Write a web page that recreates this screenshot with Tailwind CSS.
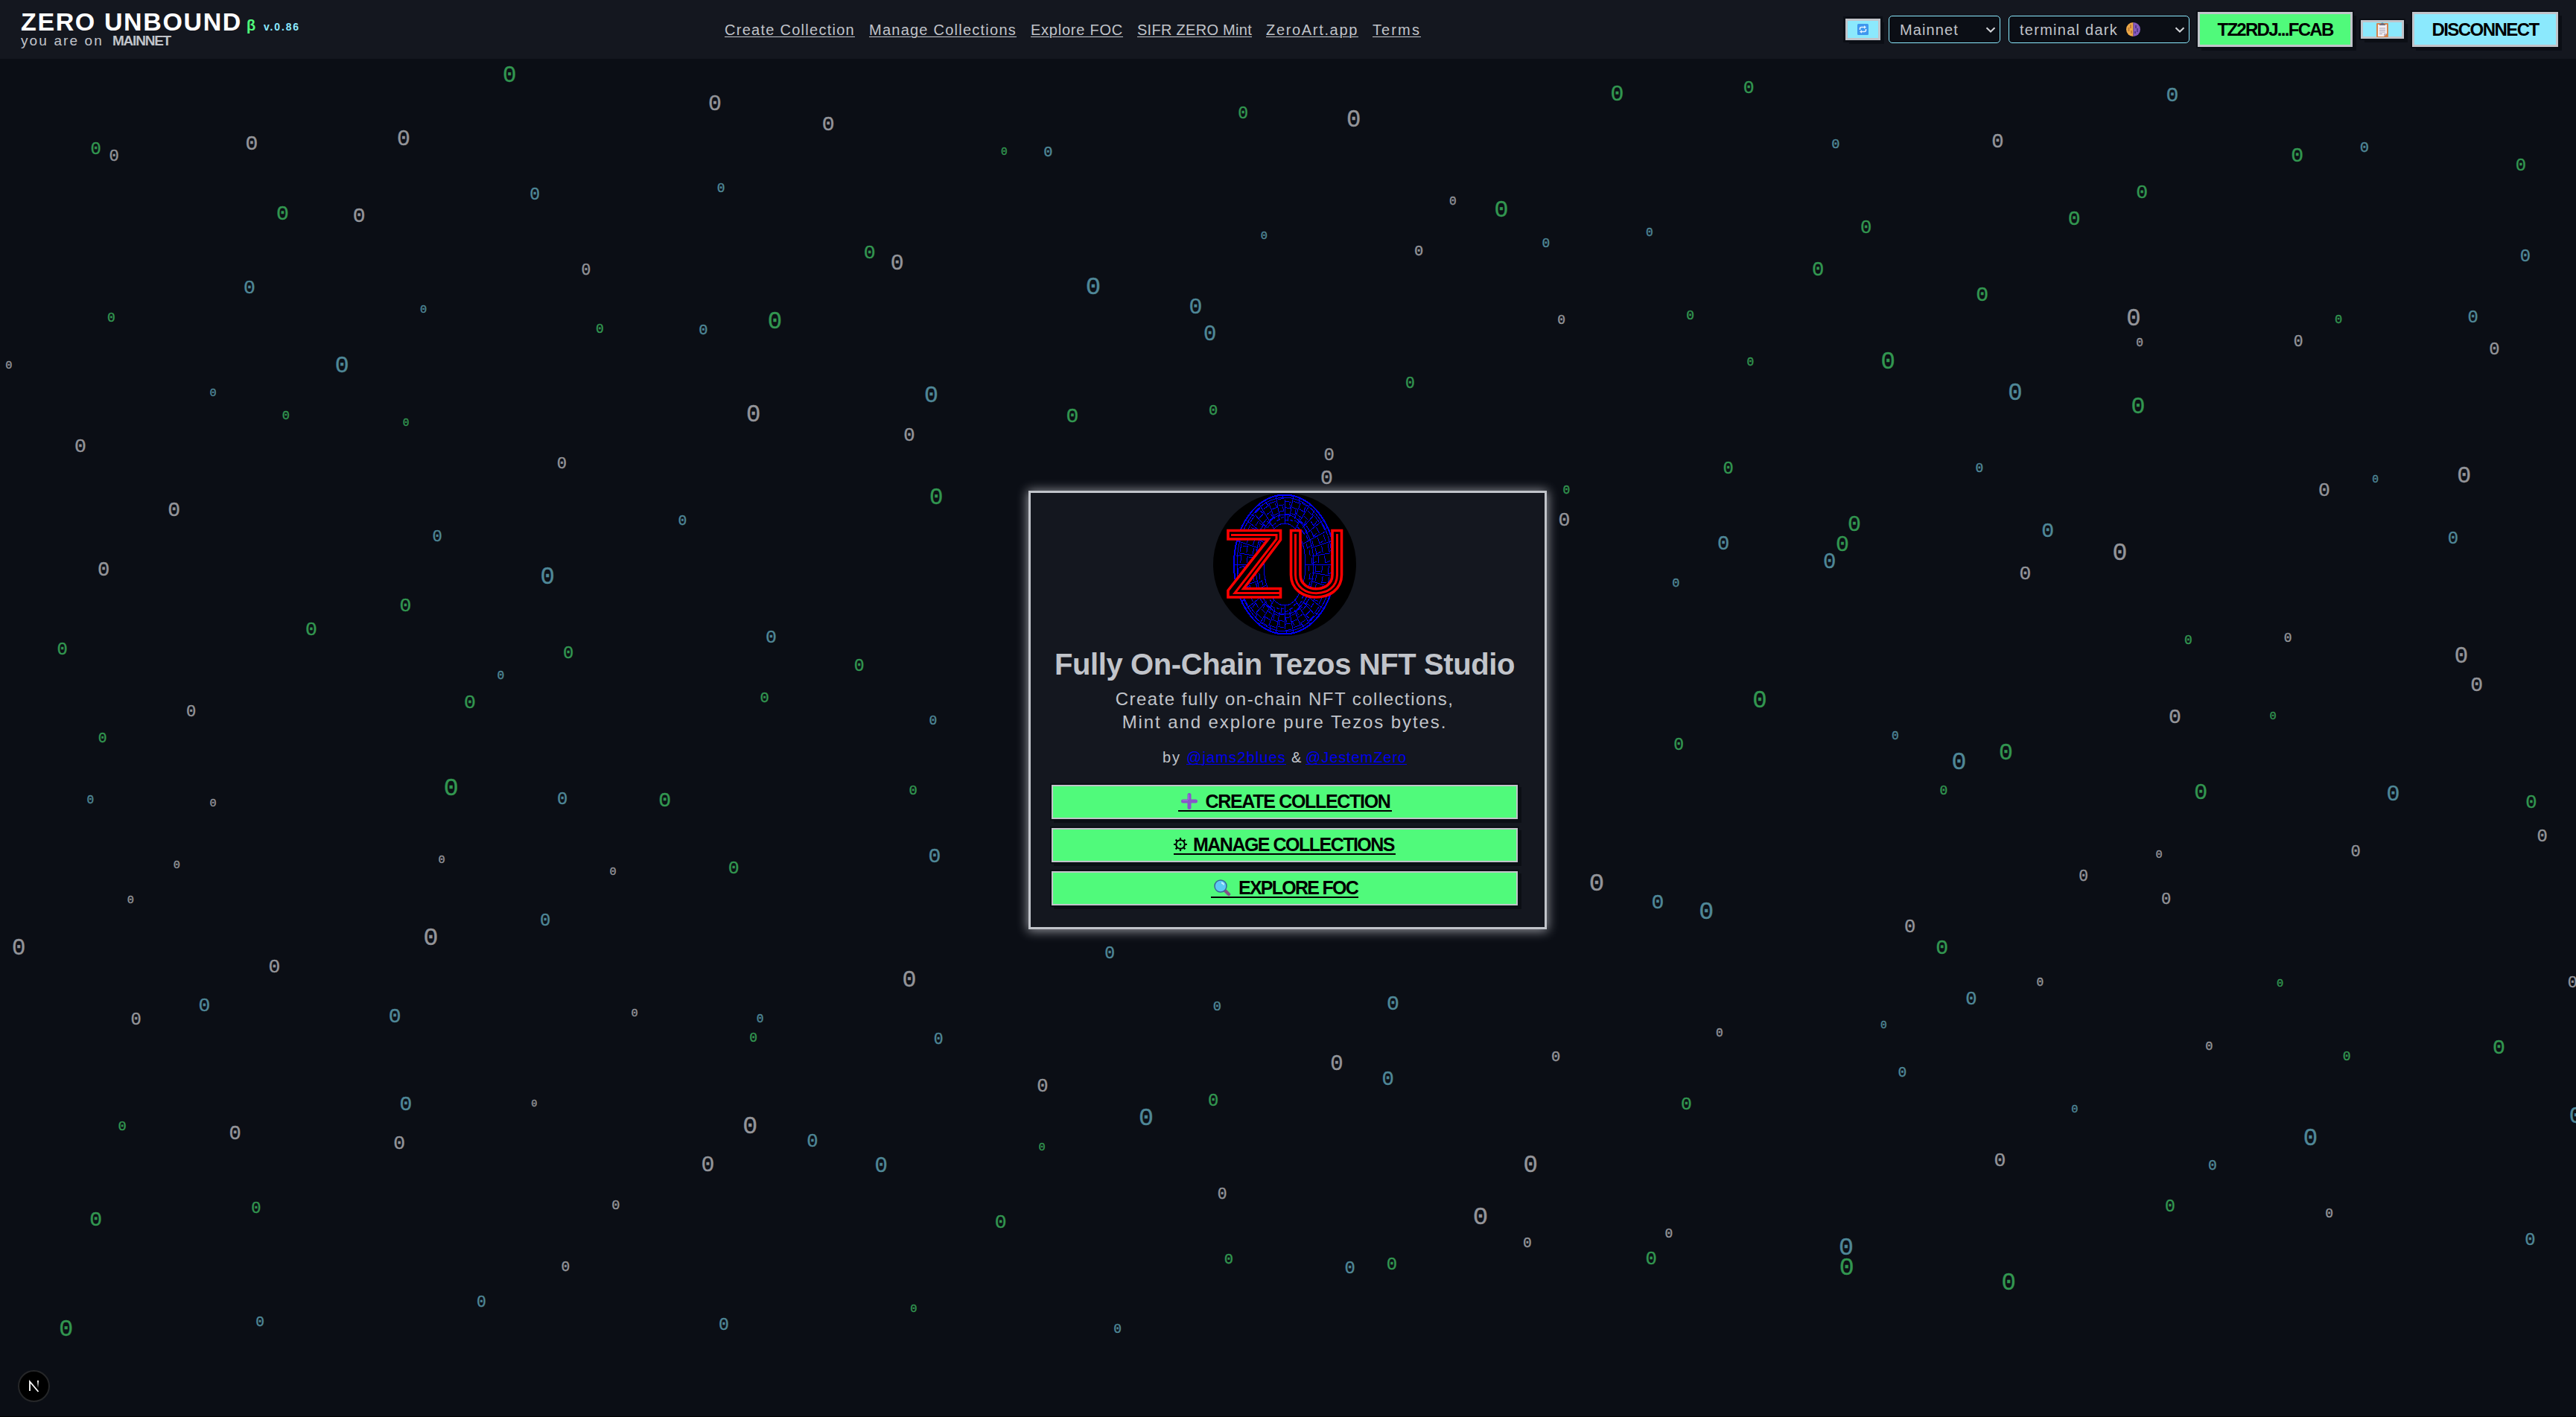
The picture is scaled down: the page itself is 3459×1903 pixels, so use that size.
<!DOCTYPE html>
<html lang="en">
<head>
<meta charset="utf-8">
<title>Zero Unbound</title>
<script src="https://cdn.jsdelivr.net/npm/@tailwindcss/browser@4"></script>
</head>
<body class="relative flex h-screen w-screen flex-col overflow-hidden bg-[#0b0e15] font-['Liberation_Sans',sans-serif] text-[#c1c4ca]">
<div id="zeros" class="absolute inset-0 overflow-hidden font-['Liberation_Mono',monospace] leading-none [-webkit-text-stroke:0.4px]"></div>

<header class="relative flex h-[79px] shrink-0 items-start bg-[#14171f]">
  <div class="w-[973px] shrink-0 pt-3 pl-7">
    <div class="flex h-[33px] items-baseline leading-[34px] font-bold">
      <span class="w-[303px] text-[34px] whitespace-nowrap text-white"><span data-fit="297" data-font="bold 34px">ZERO UNBOUND</span></span>
      <span class="w-[23px] text-[20px] text-[#50fa7b]">β</span>
      <span class="text-[14px] text-[#8be9fd]"><span data-fit="49" data-font="bold 14px">v.0.86</span></span>
    </div>
    <div class="flex text-[19px] leading-5 whitespace-nowrap">
      <span class="w-[123px]"><span data-fit="111" data-font="19px">you are on</span></span>
      <span class="font-bold"><span data-fit="78" data-font="bold 19px">MAINNET</span></span>
    </div>
  </div>
  <nav class="flex shrink-0 gap-[19px] pt-[30px] text-[20px] leading-5 whitespace-nowrap">
    <a class="w-[175px] underline decoration-1 underline-offset-2"><span data-fit="175" data-font="20px">Create Collection</span></a>
    <a class="w-[198px] underline decoration-1 underline-offset-2"><span data-fit="198" data-font="20px">Manage Collections</span></a>
    <a class="w-[124px] underline decoration-1 underline-offset-2"><span data-fit="124" data-font="20px">Explore FOC</span></a>
    <a class="w-[154px] underline decoration-1 underline-offset-2"><span data-fit="154" data-font="20px">SIFR ZERO Mint</span></a>
    <a class="w-[124px] underline decoration-1 underline-offset-2"><span data-fit="124" data-font="20px">ZeroArt.app</span></a>
    <a class="w-[65px] underline decoration-1 underline-offset-2"><span data-fit="65" data-font="20px">Terms</span></a>
  </nav>
  <div class="ml-auto flex h-[79px] items-center pr-6 text-[20px] leading-5 whitespace-nowrap">
    <button class="mr-[11px] flex h-[29px] w-[47px] items-center justify-center border-[3px] border-[#c1c4ca] bg-[#8be9fd] shadow-[0_0_0_3px_#0b0e15,5px_5px_0_0_#0b0e15]">
      <svg width="15" height="15" viewBox="0 0 15 15"><rect width="15" height="15" rx="1.5" fill="#3f97ee"/><path d="M3.5 8V6.5Q3.500 4.500 5.500 4.500H10M11.500 7V8.500Q11.500 10.500 9.500 10.500H5" fill="none" stroke="#e4f2ff" stroke-width="1.6"/><path d="M9 2.300l3 2.200-3 2.200zM6 8.300l-3 2.200 3 2.200z" fill="#e4f2ff"/></svg>
    </button>
    <div class="mr-[11px] flex h-[37px] w-[150px] items-center justify-between rounded-[5px] border border-[#8be9fd] bg-[#0b0e15] pr-[5px] pl-[14px]">
      <span data-fit="79" data-font="20px">Mainnet</span>
      <svg class="shrink-0" width="14" height="8" viewBox="0 0 14 8"><path d="M1.500 1.200L7 6.500l5.500-5.300" fill="none" stroke="#d4d6da" stroke-width="2"/></svg>
    </div>
    <div class="mr-[11px] flex h-[37px] w-[243px] items-center rounded-[5px] border border-[#8be9fd] bg-[#0b0e15] pr-[5px] pl-[14px]">
      <span data-fit="132" data-font="20px">terminal dark</span>
      <svg class="ml-[11px] shrink-0" width="19" height="19" viewBox="0 0 19 19"><path d="M9.500 0a9.500 9.500 0 0 0 0 19z" fill="#eda847"/><path d="M9.500 0a9.500 9.500 0 0 1 0 19z" fill="#8458bd"/><path d="M6 3v5M3.500 7v5M7 11v4" stroke="#bd7937" stroke-width="1.800"/><path d="M13 4v4M15 8v5M12 12v3" stroke="#51398a" stroke-width="1.800"/></svg>
      <svg class="ml-auto shrink-0" width="14" height="8" viewBox="0 0 14 8"><path d="M1.500 1.200L7 6.500l5.500-5.300" fill="none" stroke="#d4d6da" stroke-width="2"/></svg>
    </div>
    <button class="mr-[11px] flex h-[47px] w-[208px] items-center justify-center border-[3px] border-[#c1c4ca] bg-[#50fa7b] text-[24px] leading-6 font-bold text-black shadow-[0_0_0_2px_#0b0e15,5px_5px_0_0_#0b0e15]"><span data-fit="155" data-font="bold 24px">TZ2RDJ...FCAB</span></button>
    <button class="mr-[11px] flex h-[25px] w-[58px] items-center justify-center border-[3px] border-[#c1c4ca] bg-[#8be9fd] shadow-[0_0_0_2px_#0b0e15,5px_5px_0_0_#0b0e15]">
      <svg class="shrink-0" width="16" height="20" viewBox="0 0 16 20"><rect y="1" width="16" height="19" rx="1" fill="#d4854f"/><path d="M2 3h12v12l-4 4H2z" fill="#f1eef4"/><path d="M14 15l-4 4v-4z" fill="#b9b2c6"/><path d="M4 4h8V2.500H10a2 2 0 0 0-4 0H4z" fill="#6f6c7b"/><path d="M4 8h8M4 10.500h8M4 13h8M4 15.500h4" stroke="#a59fae"/></svg>
    </button>
    <button class="flex h-[47px] w-[196px] items-center justify-center border-[3px] border-[#c1c4ca] bg-[#8be9fd] text-[24px] leading-6 font-bold text-black shadow-[0_0_0_2px_#0b0e15,5px_5px_0_0_#0b0e15]"><span data-fit="143" data-font="bold 24px">DISCONNECT</span></button>
  </div>
</header>

<main class="relative flex justify-center pt-[580px] pr-[1px]">
  <section class="flex h-[589px] w-[696px] flex-col items-center border-[3px] border-[#c1c4ca] bg-[#14171f] pr-[8px] whitespace-nowrap shadow-[0_1px_14px_1px_rgba(200,202,210,0.75)]">
    <svg class="shrink-0" width="192" height="192" viewBox="0 0 192 192">
      <circle cx="96" cy="96" r="96" fill="#000"/>
      <g id="tunnel" fill="none" stroke="#0000ff" stroke-width="1" shape-rendering="crispEdges"></g>
      <g fill="none" stroke="#fe0000">
        <path d="M20 50.500H90.500V63L41 128.500H90.500V140H20V131L74 62H20Z" fill="#000" stroke-width="3.600"/>
        <path d="M24 56.500H85V62L29 134.500H91" stroke-width="3"/>
        <path d="M104.500 50.500H117V110C117 135 160 135 160 110V50.500H172.500V110C172.500 150 104.500 150 104.500 110Z" fill="#000" stroke-width="3.600"/>
        <path d="M110.500 55V110C110.500 143 166.500 143 166.500 110V55" stroke-width="3"/>
      </g>
    </svg>
    <h1 class="mt-[16px] h-[53px] text-[40px] leading-[44px] font-bold"><span data-fit="618" data-font="bold 40px">Fully On-Chain Tezos NFT Studio</span></h1>
    <p class="flex flex-col items-center text-[24px] leading-[31px]">
      <span data-fit="455" data-font="24px">Create fully on-chain NFT collections,</span>
      <span data-fit="437" data-font="24px">Mint and explore pure Tezos bytes.</span>
    </p>
    <p class="mt-[20px] flex gap-[7px] text-[20px] leading-6">
      <span data-fit="25" data-font="20px">by</span>
      <a class="text-[#0000ee] underline decoration-1 underline-offset-2"><span data-fit="134" data-font="20px">@jams2blues</span></a>
      <span data-fit="12" data-font="20px">&amp;</span>
      <a class="text-[#0000ee] underline decoration-1 underline-offset-2"><span data-fit="136" data-font="20px">@JestemZero</span></a>
    </p>
    <div class="mt-[25px] flex w-[626px] flex-col gap-3 text-[25px] leading-[26px] font-bold text-black">
      <a class="flex h-[46px] items-center justify-center border-2 border-[#c1c4ca] bg-[#50fa7b] shadow-[0_0_0_2px_#0b0e15,4px_4px_0_1px_#0b0e15]">
        <span class="flex h-[25px] w-[287px] items-center border-b-2 border-black pl-1">
          <svg class="shrink-0" width="22" height="22" viewBox="0 0 22 22"><path d="M11 2.500v17M2.500 11h17" stroke="#8855c9" stroke-width="5" stroke-linecap="round"/><path d="M10 2v7M2 10h7" stroke="#a777dd"/></svg>
          <span class="ml-[11px]" data-fit="248" data-font="bold 25px">CREATE COLLECTION</span>
        </span>
      </a>
      <a class="flex h-[46px] items-center justify-center border-2 border-[#c1c4ca] bg-[#50fa7b] shadow-[0_0_0_2px_#0b0e15,4px_4px_0_1px_#0b0e15]">
        <span class="flex h-[25px] w-[298px] items-center border-b-2 border-black">
          <svg class="shrink-0" width="18" height="18" viewBox="0 0 18 18" fill="none" stroke="#000"><circle cx="9" cy="9" r="5.800" stroke-width="2"/><path d="M9 0v3M9 15v3M0 9h3M15 9h3M2.600 2.600l2.200 2.200M13.200 13.200l2.200 2.200M2.600 15.400l2.200-2.200M13.200 4.800l2.200-2.200" stroke-width="2.200"/><circle cx="9" cy="9" r="1.400" fill="#000" stroke="none"/></svg>
          <span class="ml-2" data-fit="270" data-font="bold 25px">MANAGE COLLECTIONS</span>
        </span>
      </a>
      <a class="flex h-[46px] items-center justify-center border-2 border-[#c1c4ca] bg-[#50fa7b] shadow-[0_0_0_2px_#0b0e15,4px_4px_0_1px_#0b0e15]">
        <span class="flex h-[25px] w-[198px] items-center border-b-2 border-black pl-1">
          <svg class="shrink-0" width="23" height="23" viewBox="0 0 23 23"><path d="M15 15l5 5" stroke="#84508a" stroke-width="4.500" stroke-linecap="round"/><circle cx="9" cy="9" r="8" fill="#5dc9f4" stroke="#38679a" stroke-width="1.500"/><path d="M10 4.500q3 .5 3 3" fill="none" stroke="#c8f0ff" stroke-width="1.800"/></svg>
          <span class="ml-[10px]" data-fit="160" data-font="bold 25px">EXPLORE FOC</span>
        </span>
      </a>
    </div>
  </section>
</main>

<button class="absolute bottom-[20px] left-[24px] flex size-[43px] items-center justify-center rounded-full border-2 border-[#252628] bg-black">
  <svg width="16" height="17" viewBox="0 0 16 17"><defs><linearGradient id="n" x2="0" y2="1"><stop stop-color="#fff"/><stop offset="1" stop-color="#fff" stop-opacity="0"/></linearGradient></defs><path d="M2 15V2.500l11.500 13.500" fill="none" stroke="#fff" stroke-width="1.800"/><rect x="12" y="1" width="2" height="10" fill="url(#n)"/></svg>
</button>
<div class="absolute inset-x-0 bottom-0 h-px bg-black"></div>

<script>
// Drifting zeros: colour, centre x, centre y, glyph height, on a grid scaled per panel.
const panels = [
  [0, 80, "g925,34,36 w1298,102,35 w1504,149,33 w457,194,33 w733,184,35 g174,207,28 w207,226,26 b971,315,27 b1309,301,21 g513,359,33 w652,363,33 w1064,491,25 b453,531,31 b769,584,18 g202,603,21 g1089,630,21 b1277,632,24 g1407,610,38 w16,715,18 b621,712,37 b387,779,18 g519,831,20 g737,849,17 w1368,829,38 w146,903,31 w1020,945,26 w316,1052,33 b794,1115,26 b1239,1078,23 w188,1190,32 b994,1208,38 g736,1276,31 g565,1331,31 g113,1377,28 g1032,1386,28 b1400,1348,29 b909,1440,19 g853,1502,31 g1388,1492,24 w347,1524,26"],
  [1150, 80, "g1381,80,35 g702,125,27 w903,138,38 g268,215,17 b348,216,24 w1083,330,19 g1171,349,37 b740,411,18 w1021,446,24 b1252,430,21 b1440,403,19 g24,449,31 w74,475,35 b430,529,40 b616,578,35 b642,641,34 w1280,609,21 g1514,598,21 g1005,756,25 b136,782,37 g392,832,33 g648,819,24 w96,877,30 w858,923,28 w854,977,33 g145,1022,36 g1289,1007,19 w1285,1075,31 b1488,1223,20 g5,1418,27 b139,1546,21"],
  [2300, 80, "g65,63,29 b834,81,33 b223,196,22 w517,188,32 g1061,222,33 b1183,205,24 g1467,246,28 g779,308,31 g656,370,33 g278,391,30 g191,488,32 b1475,458,28 g489,549,33 w764,604,38 w775,662,19 w1063,658,25 g1136,606,20 b1380,601,28 w1419,676,28 g68,707,19 g318,704,38 b549,777,38 g772,809,37 g28,955,28 b484,955,21 w1110,1006,31 b1203,981,17 w1364,970,37 b19,1130,32 g257,1086,35 g235,1133,35 b212,1175,34 b608,1101,33 w739,1152,39 w567,1201,31 b1344,1119,28 g863,1357,21 w1044,1352,21 w1359,1394,36 w1387,1461,33 g85,1497,38 w839,1536,33 g1017,1536,18"],
  [0, 970, "g186,37,23 g819,151,39 b164,181,19 w387,189,18 b1021,178,28 g1207,181,33 w321,334,18 w802,321,18 w1113,349,18 g1332,339,29 w237,415,18 b990,462,28 w34,525,36 w782,501,39 w498,569,31 b371,661,31 w247,693,28 b717,686,33 w1152,680,18 b1380,692,19 g1368,738,21 b737,892,33 w970,891,16 g222,943,22 w427,959,32 w725,982,31 w1362,942,39 b1475,978,30 w1285,1034,35 g174,1161,33 g465,1136,26 w1118,1129,22 w1027,1274,23 b874,1355,25 g120,1417,37 b472,1403,23 b1314,1408,27"],
  [1150, 970, "g1493,52,27 g103,159,22 b142,311,33 w1344,374,40 b1455,419,33 b1543,440,39 b460,540,27 w96,599,37 b655,664,22 b974,656,33 b149,741,25 w872,798,34 w1270,781,24 b965,831,32 w338,849,30 g648,883,28 b526,923,39 g1507,891,29 g337,993,18 b45,1037,34 w1224,1034,38 w664,1103,25 g262,1167,31 w1133,1153,40 w1218,1218,23 w1475,1196,21 g676,1255,24 b896,1275,28 g972,1267,28 g1443,1253,30 g104,1371,18 b474,1418,21"],
  [2300, 970, "b331,31,19 b447,91,39 g532,69,37 g419,159,21 g886,163,35 b1235,166,35 g1486,186,30 w1506,265,28 w810,309,18 w1167,301,26 w673,358,25 w823,413,26 w358,477,30 g416,526,33 w594,607,19 g1030,611,18 b469,646,30 w1561,608,26 w12,726,19 b310,707,17 w901,756,20 g1151,782,21 g1427,759,33 b344,819,23 b657,904,18 b1567,920,36 b1085,971,38 w521,1022,31 b907,1037,23 g830,1131,27 w1119,1149,21 b242,1226,39 g243,1273,39 g537,1310,38 b1484,1209,28"]
];
const tones = { g: "absolute text-[#329650]", w: "absolute text-[#939499]", b: "absolute text-[#4f8797]" };
const layer = document.getElementById("zeros");
for (const [ox, oy, list] of panels) {
  for (const item of list.split(" ")) {
    const [x, y, h] = item.slice(1).split(",").map(Number);
    const size = h / 1.742 / 0.675;
    const el = document.createElement("span");
    el.className = tones[item[0]];
    el.textContent = "0";
    el.style.fontSize = size.toFixed(1) + "px";
    el.style.left = (ox + x / 1.3522 - size * 0.3).toFixed(1) + "px";
    el.style.top = (oy + y / 1.742 - size * 0.42).toFixed(1) + "px";
    layer.append(el);
  }
}

// Ring of radial spokes and stepped rungs behind the monogram.
let d = "";
const pt = (a, t) => (96 + Math.cos(a) * (28 + 40 * t)).toFixed(1) + " " + (96 + Math.sin(a) * (55 + 38 * t)).toFixed(1);
for (let i = 0; i < 36; i++) {
  const a = i * Math.PI / 18, s = Math.PI / 18;
  d += "M" + pt(a, i % 3 ? 0.25 : 0) + "L" + pt(a, i % 2 ? 0.85 : 1);
  for (let k = 0; k < 4; k++) {
    const t = 0.12 + 0.22 * k + (i % 3) * 0.05;
    d += "M" + pt(a + s * 0.15, t) + "L" + pt(a + s * 0.85, t);
    if ((i + k) % 2) d += "L" + pt(a + s * 0.7, t + 0.16);
  }
}
document.getElementById("tunnel").innerHTML = '<ellipse cx="96" cy="96" rx="68" ry="93.500" stroke-width="2"/><ellipse cx="96" cy="96" rx="64" ry="90"/><ellipse cx="96" cy="96" rx="28" ry="55"/><ellipse cx="96" cy="96" rx="39" ry="67"/><path d="' + d + '"/>';

const ctx = document.createElement("canvas").getContext("2d");
for (const el of document.querySelectorAll("[data-fit]")) {
  const text = el.textContent;
  ctx.font = el.dataset.font + ' "Liberation Sans"';
  el.style.letterSpacing = ((el.dataset.fit - ctx.measureText(text).width) / text.length).toFixed(3) + "px";
}
</script>
</body>
</html>
